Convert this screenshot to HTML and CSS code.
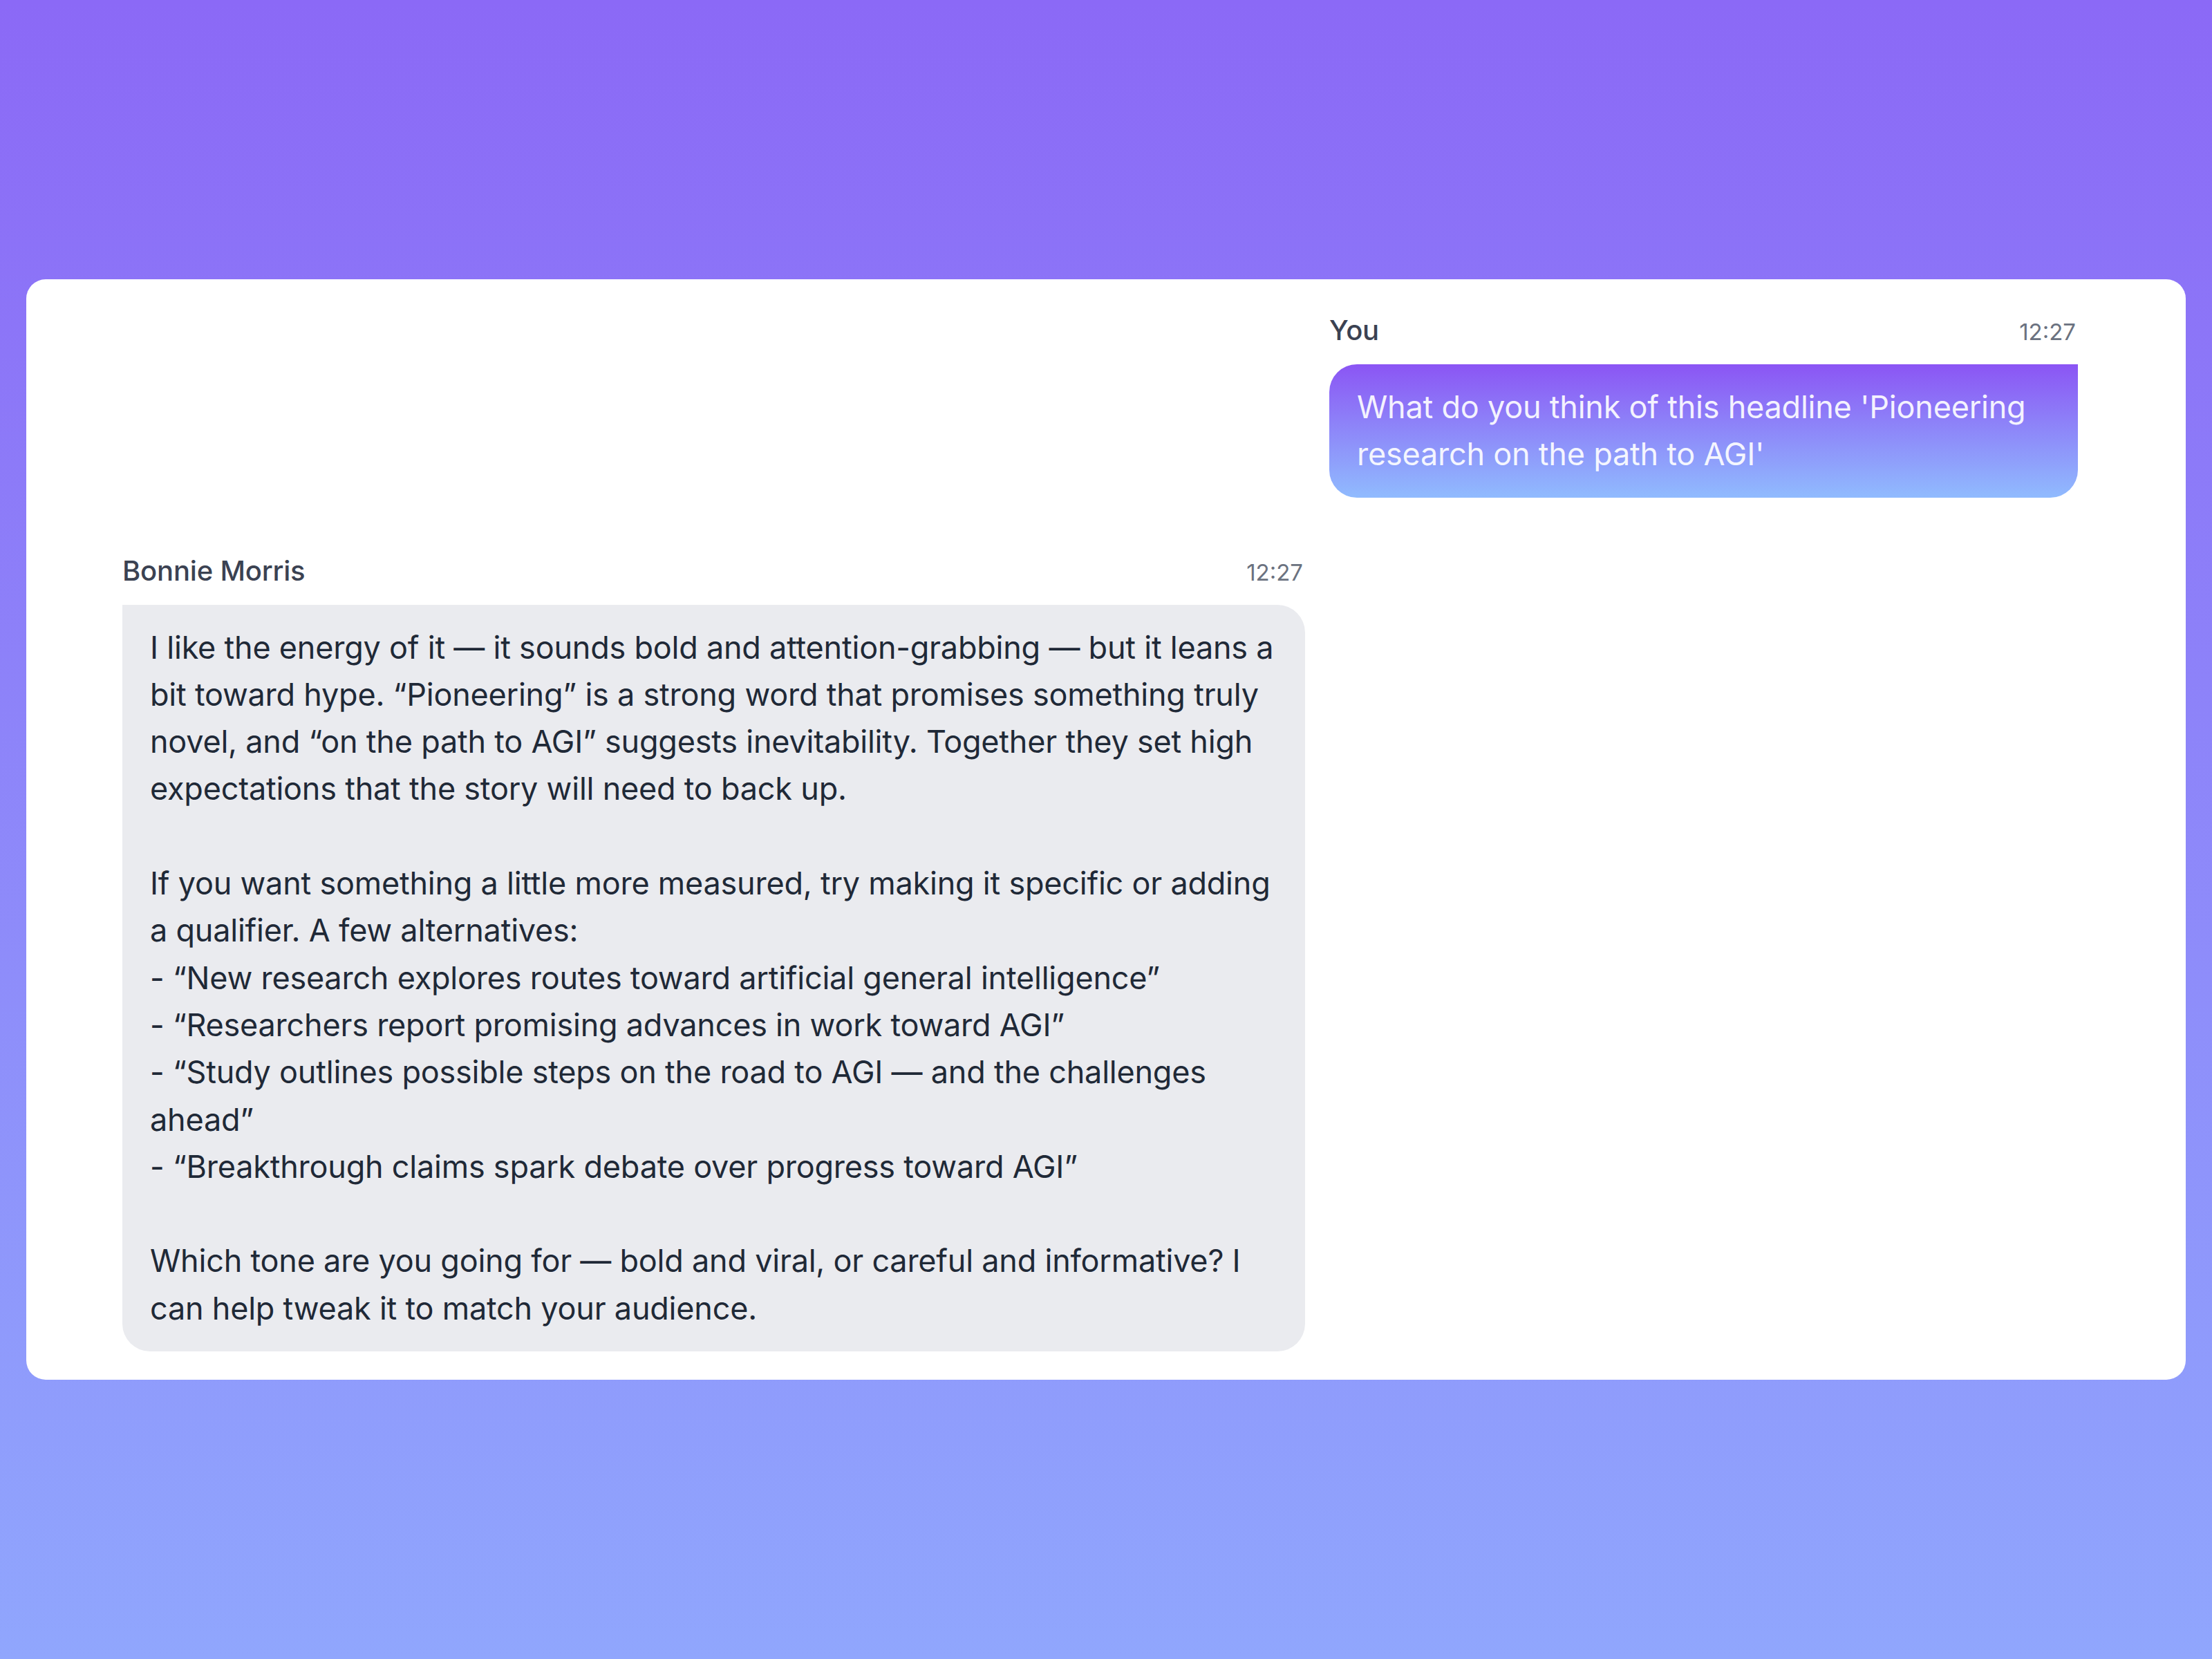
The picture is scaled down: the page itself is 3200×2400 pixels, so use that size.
FILE: index.html
```html
<!DOCTYPE html>
<html lang="en">
<head>
<meta charset="utf-8">
<title>Chat</title>
<link rel="stylesheet" href="styles.css">
</head>
<body>
<main class="card">
  <section class="msg msg-user">
    <header class="msg-head">
      <span class="msg-name">You</span>
      <span class="msg-time">12:27</span>
    </header>
    <div class="bubble bubble-user">What do you think of this headline 'Pioneering research on the path to AGI'</div>
  </section>
  <section class="msg msg-bot">
    <header class="msg-head">
      <span class="msg-name">Bonnie Morris</span>
      <span class="msg-time">12:27</span>
    </header>
    <div class="bubble bubble-bot">
      <p>I like the energy of it — it sounds bold and attention-grabbing — but it leans a bit toward hype. “Pioneering” is a strong word that promises something truly novel, and “on the path to AGI” suggests inevitability. Together they set high expectations that the story will need to back up.</p>
      <p>If you want something a little more measured, try making it specific or adding a qualifier. A few alternatives:<br>- “New research explores routes toward artificial general intelligence”<br>- “Researchers report promising advances in work toward AGI”<br>- “Study outlines possible steps on the road to AGI — and the challenges ahead”<br>- “Breakthrough claims spark debate over progress toward AGI”</p>
      <p>Which tone are you going for — bold and viral, or careful and informative? I can help tweak it to match your audience.</p>
    </div>
  </section>
</main>
</body>
</html>
```

FILE: styles.css
```css
html, body {
  margin: 0;
  padding: 0;
}
body {
  min-height: 100vh;
  box-sizing: border-box;
  display: flex;
  align-items: center;
  padding: 0 38px;
  background: linear-gradient(180deg, #8b69f6 0%, #90a6fd 100%);
  font-family: Inter, "Noto Sans", sans-serif;
}
.card {
  flex: 1;
  background: #ffffff;
  border-radius: 28px;
  padding: 45px 156px 41px 139px;
  display: flex;
  flex-direction: column;
  gap: 77px;
}
.msg {
  display: flex;
  flex-direction: column;
  gap: 18px;
}
.msg-user {
  align-self: flex-end;
  width: 1083px;
}
.msg-bot {
  align-self: flex-start;
  width: 1711px;
}
.msg-head {
  display: flex;
  justify-content: space-between;
  align-items: baseline;
  line-height: 58px;
}
.msg-name {
  font-size: 40px;
  font-weight: 500;
  color: #3b4252;
  letter-spacing: -0.005em;
}
.msg-time {
  font-size: 33px;
  color: #6b7280;
  padding-right: 3px;
}
.bubble {
  font-size: 45px;
  line-height: 68.3px;
  padding: 28px 40px;
  letter-spacing: -0.005em;
}
.bubble-user {
  color: rgba(255, 255, 255, 0.92);
  background: linear-gradient(180deg, #8b55f4 0%, #90bbfe 100%);
  border-radius: 40px 0 40px 40px;
}
.bubble-bot {
  color: #1f2937;
  background: #eaebef;
  border-radius: 0 40px 40px 40px;
}
.bubble-bot p {
  margin: 0 0 68.3px;
}
.bubble-bot p:last-child {
  margin-bottom: 0;
}
```
